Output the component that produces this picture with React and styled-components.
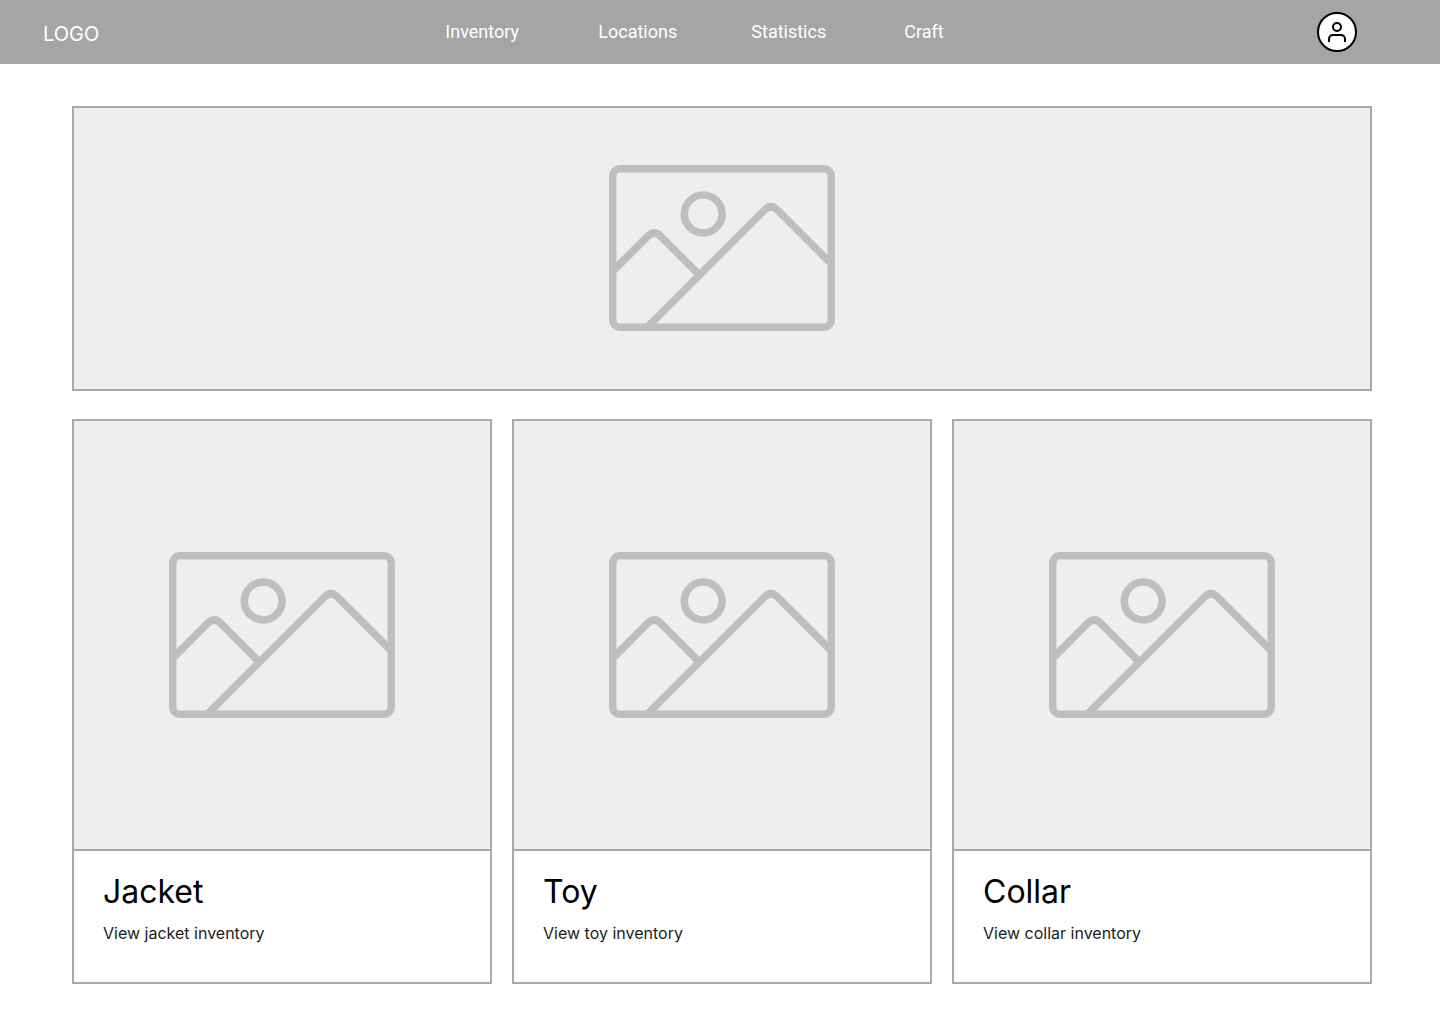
import React from 'react';
import styled, { createGlobalStyle } from 'styled-components';

const GlobalStyle = createGlobalStyle`
  *, *::before, *::after { box-sizing: border-box; }
  body {
    margin: 0;
    background: #fff;
    color: #000;
    font-family: Inter, "Liberation Sans", sans-serif;
  }
`;

const Header = styled.header`
  display: grid;
  grid-template-columns: 6fr 13fr auto;
  align-items: center;
  height: 64px;
  padding: 0 83px 0 43px;
  background: #a5a5a5;
`;

const Logo = styled.a`
  justify-self: start;
  padding-top: 4px;
  color: #fff;
  font-size: 20px;
  font-weight: 400;
  line-height: 24px;
  text-decoration: none;
`;

const Nav = styled.nav`
  display: flex;
`;

const NavLink = styled.a`
  width: 153px;
  color: #fff;
  font-family: Roboto, "Liberation Sans", sans-serif;
  font-size: 18px;
  line-height: 24px;
  text-decoration: none;
`;

const ProfileButton = styled.button`
  display: grid;
  place-items: center;
  width: 40px;
  height: 40px;
  padding: 0;
  border: 2px solid #000;
  border-radius: 50%;
  background: #fff;
  color: #000;
  cursor: pointer;
`;

const Main = styled.main`
  display: grid;
  gap: 28px;
  padding: 42px 68px 40px 72px;
`;

const Hero = styled.section`
  display: flex;
  justify-content: center;
  padding: 57px 0 58px;
  border: 2px solid #a9a9a9;
  background: #eee;
`;

const CardGrid = styled.section`
  display: grid;
  grid-template-columns: repeat(3, 1fr);
  gap: 20px;
`;

const Card = styled.article`
  border: 2px solid #a9a9a9;
  background: #fff;
`;

const CardMedia = styled.div`
  display: flex;
  justify-content: center;
  padding: 131px 0;
  border-bottom: 2px solid #a9a9a9;
  background: #eee;
`;

const CardBody = styled.div`
  padding: 21px 29px 39px;
`;

const CardTitle = styled.h2`
  margin: 0 0 11px;
  font-size: 32px;
  font-weight: 400;
  line-height: 40px;
`;

const CardLink = styled.a`
  display: block;
  color: #1c1c1c;
  font-size: 16px;
  line-height: 20px;
  text-decoration: none;
`;

const Picture = styled.svg`
  display: block;
  width: 226px;
  height: 166px;
  fill: none;
  stroke: #bebebe;
  stroke-width: 7.5;
`;

function PlaceholderPicture() {
  return (
    <Picture viewBox="0 0 226 166" aria-hidden="true">
      <rect x="3.75" y="3.75" width="218.5" height="158.5" rx="7.5" />
      <circle cx="94.2" cy="49" r="18.9" />
      <path d="M5 105L39.2 70.8Q45.2 65.3 51.2 70.8L90 109.6" />
      <path d="M38 162.5L155.7 44.8Q162 38.5 168.3 44.8L221 97.5" />
    </Picture>
  );
}

function UserIcon() {
  return (
    <svg width="24" height="24" viewBox="0 0 24 24" fill="none" stroke="currentColor" strokeWidth="2" aria-hidden="true">
      <circle cx="12" cy="7" r="4" />
      <path d="M4 22v-3a4 4 0 0 1 4-4h8a4 4 0 0 1 4 4v3" />
    </svg>
  );
}

const links = ['Inventory', 'Locations', 'Statistics', 'Craft'];
const products = ['Jacket', 'Toy', 'Collar'];

export default function App() {
  return (
    <>
      <GlobalStyle />
      <Header>
        <Logo href="#home">LOGO</Logo>
        <Nav aria-label="Main">
          {links.map((label) => (
            <NavLink key={label} href={`#${label.toLowerCase()}`}>{label}</NavLink>
          ))}
        </Nav>
        <ProfileButton type="button" aria-label="Profile">
          <UserIcon />
        </ProfileButton>
      </Header>
      <Main>
        <Hero>
          <PlaceholderPicture />
        </Hero>
        <CardGrid>
          {products.map((name) => (
            <Card key={name}>
              <CardMedia>
                <PlaceholderPicture />
              </CardMedia>
              <CardBody>
                <CardTitle>{name}</CardTitle>
                <CardLink href={`#${name.toLowerCase()}`}>{`View ${name.toLowerCase()} inventory`}</CardLink>
              </CardBody>
            </Card>
          ))}
        </CardGrid>
      </Main>
    </>
  );
}
